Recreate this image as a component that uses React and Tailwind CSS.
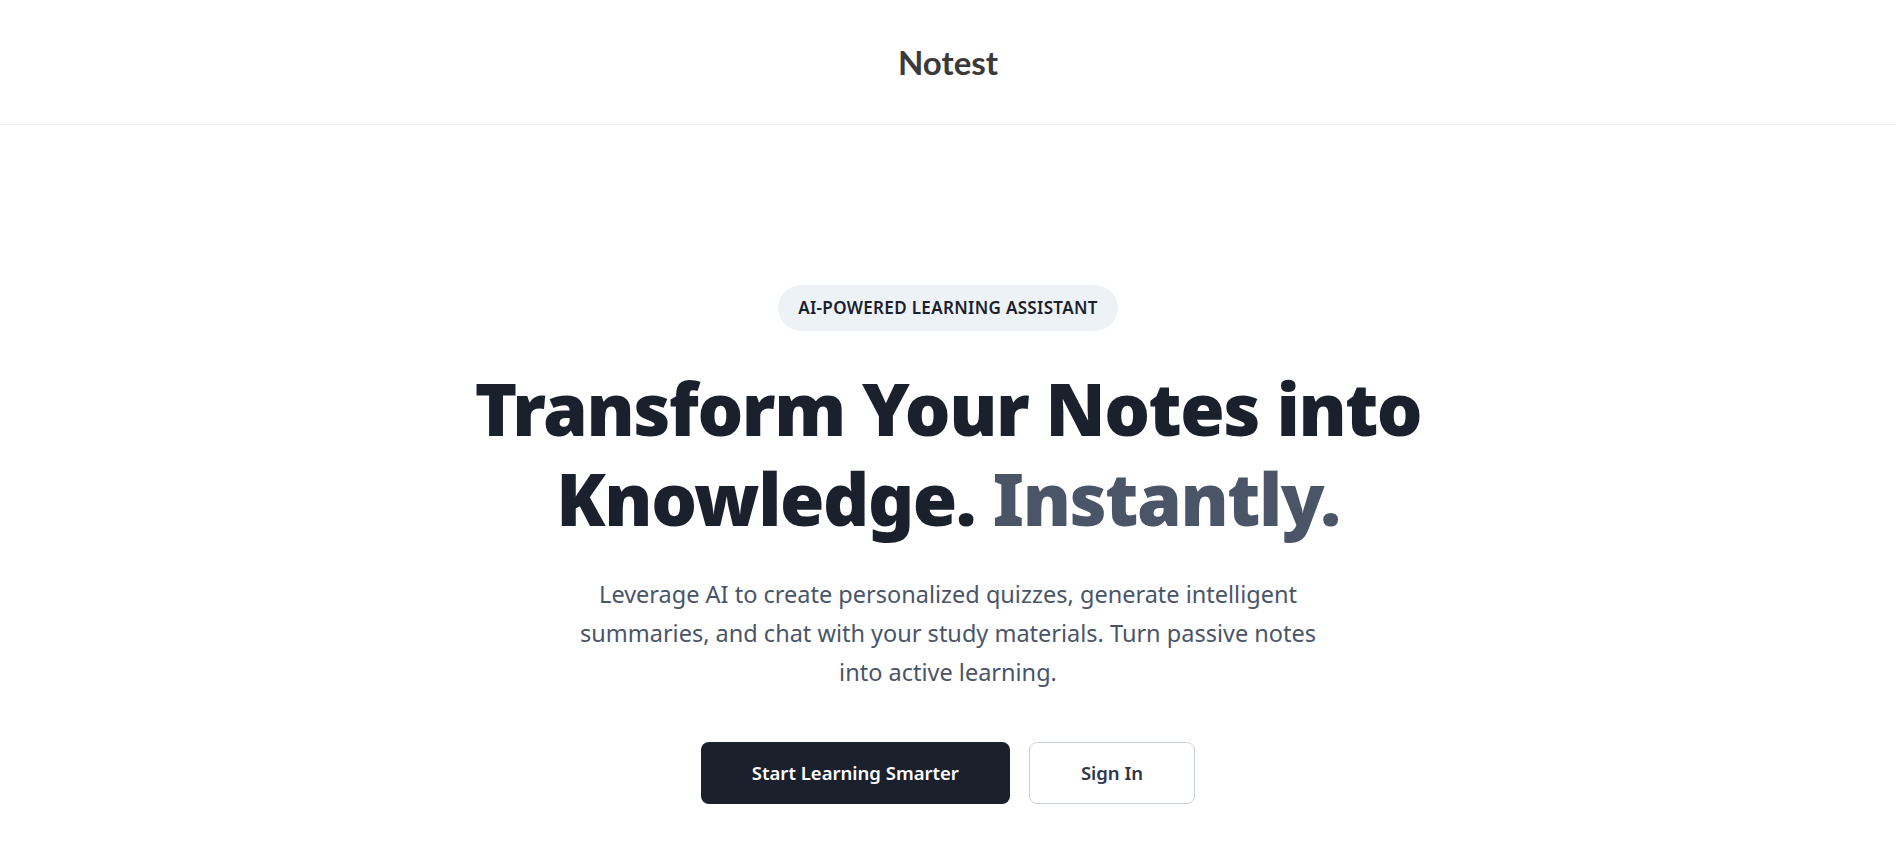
import React from 'react';

export default function App() {
  return (
    <div className="min-h-screen bg-white font-['Noto_Sans',sans-serif]">
      {/* Top bar */}
      <header className="border-b border-[#ededed] py-[44px] flex justify-center">
        <span className="text-[33px] leading-9 font-bold text-[#3a3a3a] font-['Lato',sans-serif]">Notest</span>
      </header>

      {/* Hero */}
      <main className="flex flex-col items-center text-center px-6 pt-40">
        <span className="rounded-full bg-[#edf2f7] px-5 py-[11px] text-[17px] leading-6 font-semibold text-[#1a202c] uppercase tracking-[0.02em]">
          AI-Powered Learning Assistant
        </span>

        <h1 className="mt-8 text-7xl leading-tight font-black text-[#1a202c] tracking-[-0.02em]">
          Transform Your Notes into
          <br />
          Knowledge. <span className="text-[#4a5568]">Instantly.</span>
        </h1>

        <p className="mt-8 max-w-3xl text-[23.5px] leading-[39px] text-[#4a5568]">
          Leverage AI to create personalized quizzes, generate intelligent summaries, and chat with your study
          materials. Turn passive notes into active learning.
        </p>

        <div className="mt-[50px] flex gap-[19px]">
          <button className="rounded-lg bg-[#1a202c] px-[51px] py-4 text-[18.5px] leading-7 font-semibold text-white">
            Start Learning Smarter
          </button>
          <button className="rounded-lg border border-[#cbd5e0] bg-white px-[51px] py-4 text-[18.5px] leading-7 font-semibold text-[#2d3748]">
            Sign In
          </button>
        </div>
      </main>
    </div>
  );
}
